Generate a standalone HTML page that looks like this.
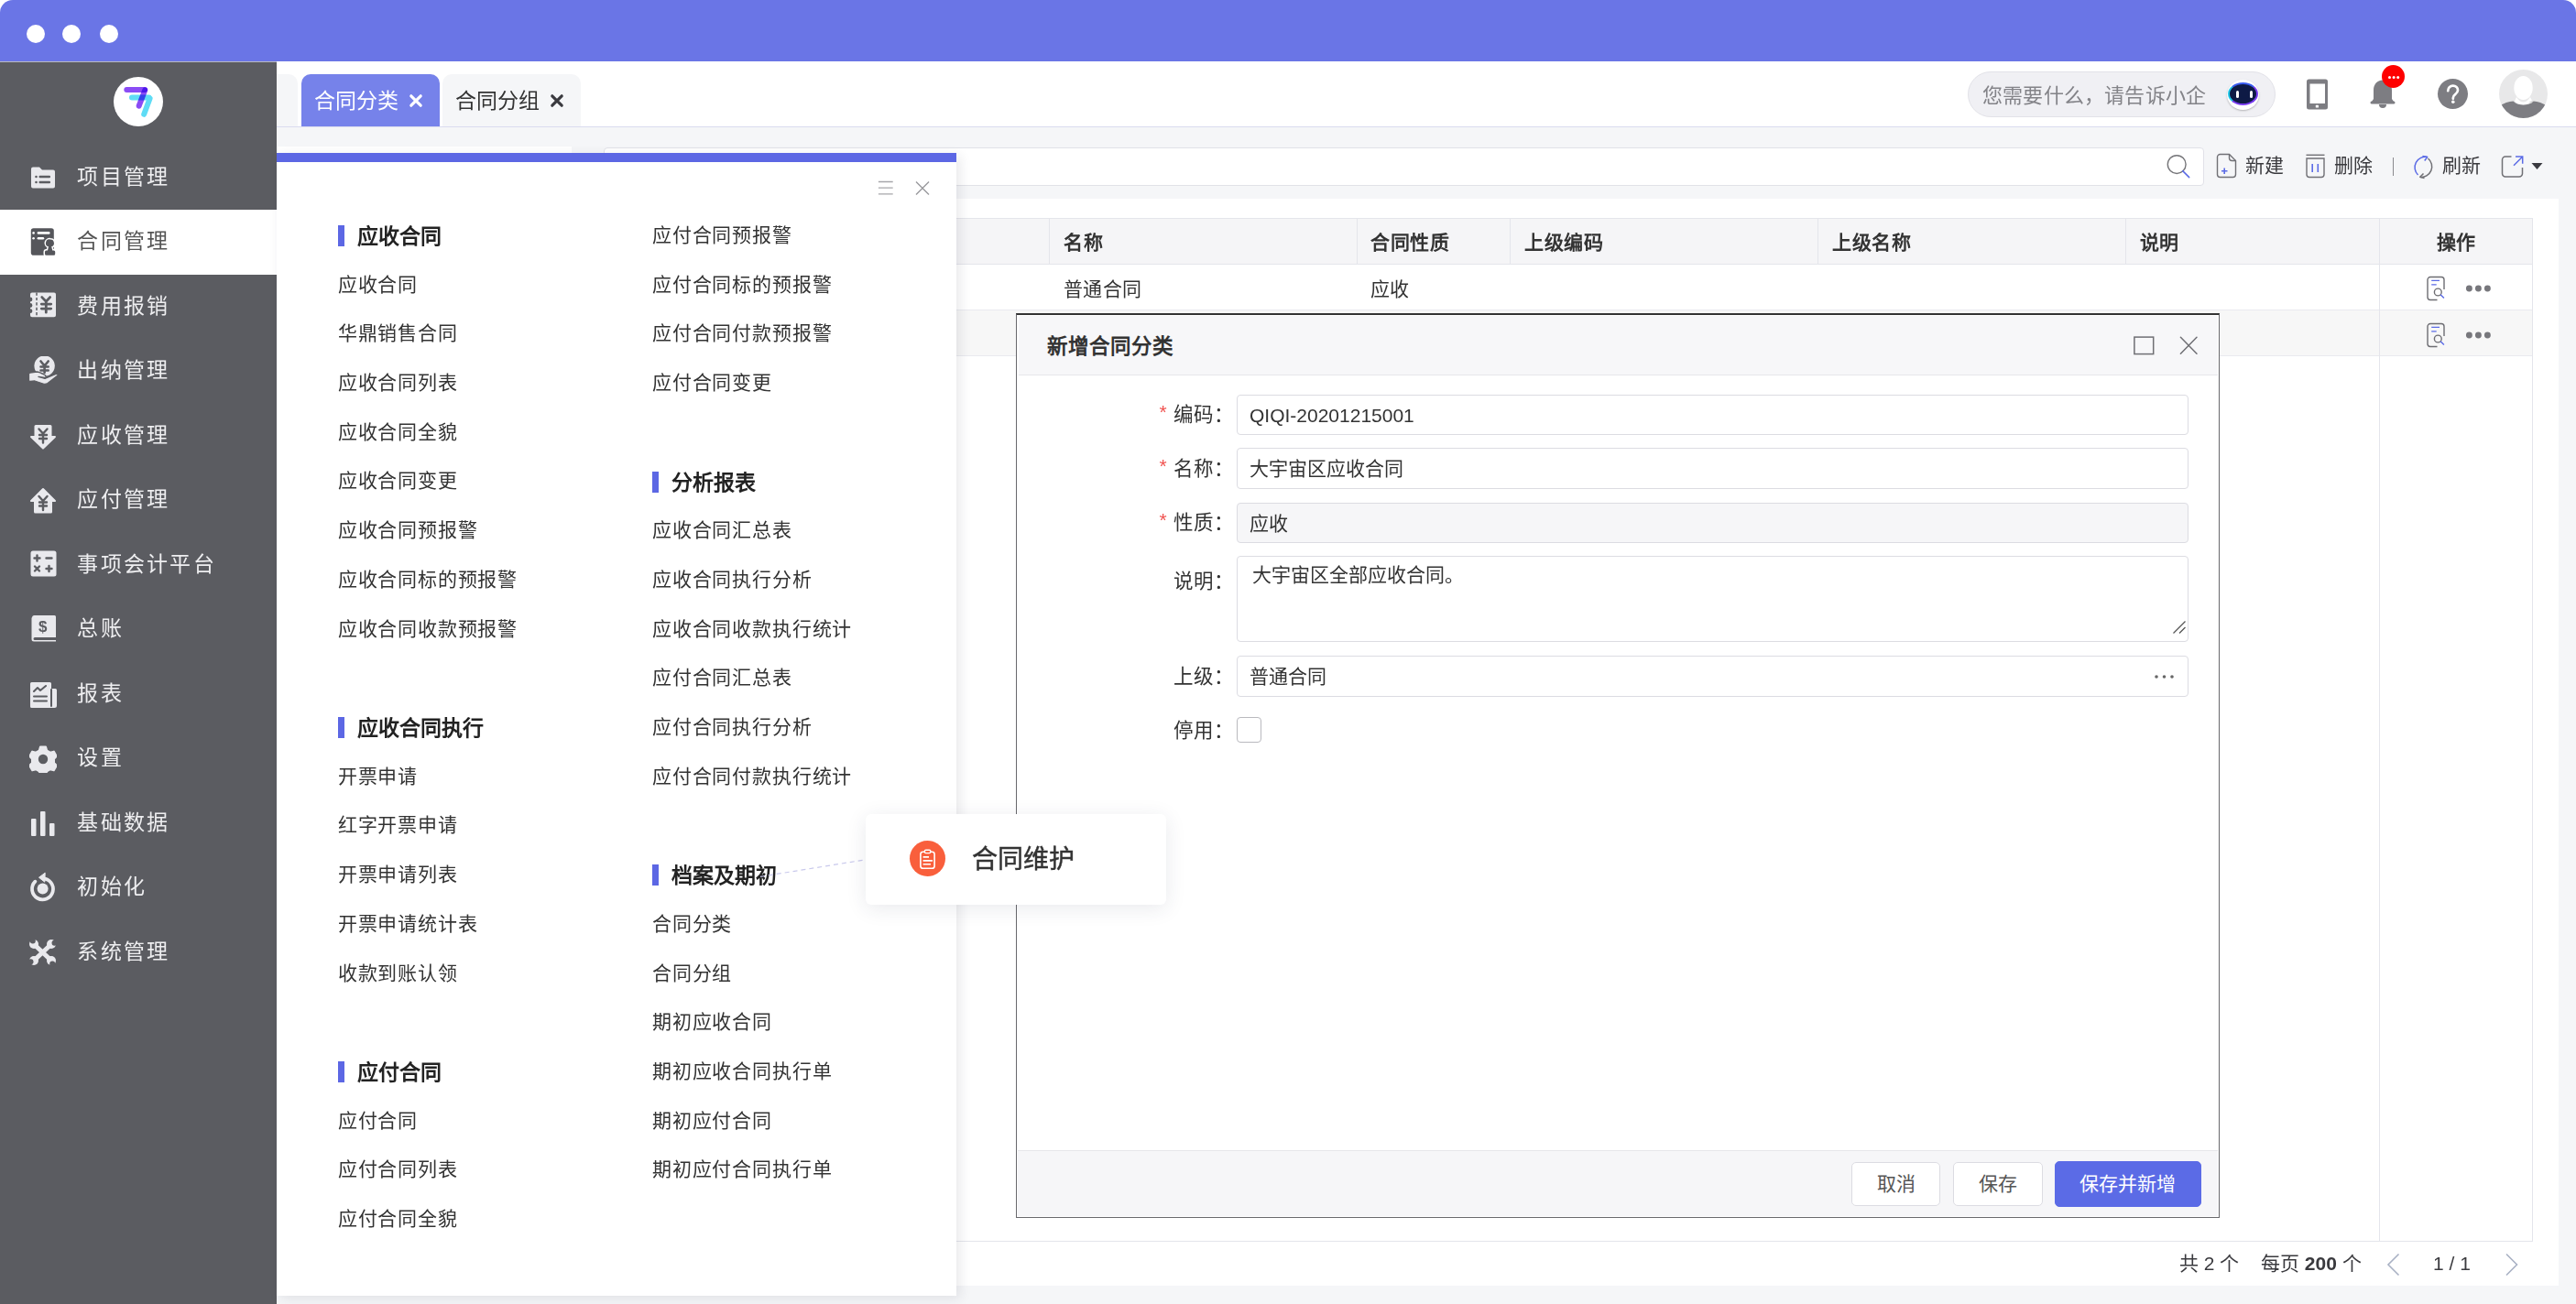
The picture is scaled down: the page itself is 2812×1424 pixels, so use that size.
<!DOCTYPE html>
<html lang="zh-CN"><head><meta charset="utf-8">
<style>
*{margin:0;padding:0;box-sizing:border-box}
html,body{width:2812px;height:1424px;overflow:hidden;background:#fff;font-family:"Liberation Sans",sans-serif;color:#333}
.a{position:absolute}
#title{left:0;top:0;width:2812px;height:67px;background:#6a75e6;border-radius:14px 14px 0 0}
.dot{width:20px;height:20px;border-radius:50%;background:#fff;top:27px}
#sb{left:0;top:67px;width:302px;height:1357px;background:#5b5c61;border-top:1px solid #b9bac0}
.mi{position:absolute;left:0;width:302px;height:70.5px;color:#eeeef0;font-size:23px;letter-spacing:2.3px;line-height:70.5px;white-space:nowrap}
.mi span{position:absolute;left:84.3px;top:-0.8px}
.mi svg{position:absolute;left:32px;top:21px}
.mi.on{background:#fff;color:#555}
#main{left:302px;top:68px;width:2510px;height:1356px;background:#f5f6f8}
#hdr{left:302px;top:68px;width:2510px;height:71px;background:#fff;border-bottom:1.2px solid #dadcef}
.tab{position:absolute;top:13px;height:57px;border-radius:10px 10px 0 0;background:#f5f6f8;font-size:23px;line-height:57px;color:#333;white-space:nowrap}
.tab.on{background:#7682ea;color:#fff}
.tb{top:166px;height:30px;line-height:30px;font-size:21px;color:#3a3a3e;white-space:nowrap}
.th{top:240px;height:50px;line-height:50px;font-size:21px;letter-spacing:0.5px;font-weight:bold;color:#333;white-space:nowrap}
.td{height:50px;line-height:50px;font-size:21px;letter-spacing:0.3px;color:#333;white-space:nowrap}
.pg{top:1365px;height:30px;line-height:30px;font-size:21px;color:#3a3a3e;white-space:nowrap}
.mh{height:40px;line-height:40px;font-size:23px;font-weight:bold;color:#222;white-space:nowrap}
.mt{height:40px;line-height:40px;font-size:21px;letter-spacing:0.83px;color:#333;white-space:nowrap}
.req{left:1263.5px;width:12px;text-align:center;font-size:21px;color:#f0524f;line-height:30px;height:30px}
.lb{left:1195px;width:152px;text-align:right;height:40px;line-height:40px;font-size:21.5px;color:#333;white-space:nowrap}
.inp{left:1350px;width:1039px;border:1.3px solid #dcdce2;border-radius:4px;background:#fff}
.it{font-size:21px;color:#333;white-space:nowrap}
.btn{top:1269.3px;height:47.7px;line-height:45.5px;text-align:center;font-size:21px;color:#555;background:#fff;border:1.3px solid #dcdce2;border-radius:5px;white-space:nowrap}
</style></head><body>
<div id="title" class="a">
  <div class="a dot" style="left:29px"></div>
  <div class="a dot" style="left:68px"></div>
  <div class="a dot" style="left:109px"></div>
</div>
<!-- SIDEBAR -->
<div id="sb" class="a">
  <div class="a" style="left:124px;top:15.5px;width:54px;height:54px;border-radius:50%;background:#fff">
    <svg width="54" height="54" viewBox="0 0 54 54" style="position:absolute;left:0;top:0">
      <g stroke-linecap="round" stroke-width="6" fill="none">
        <line x1="20" y1="22.4" x2="38.5" y2="22.4" stroke="#5fdcf5"/>
        <line x1="39.6" y1="23.5" x2="33.2" y2="40.8" stroke="#5fdcf5"/>
        <line x1="14.3" y1="14.1" x2="34" y2="14.1" stroke="#8a4cf5" style="mix-blend-mode:multiply"/>
        <line x1="34.3" y1="14.3" x2="27.7" y2="31.6" stroke="#8a4cf5" style="mix-blend-mode:multiply"/>
      </g>
    </svg>
  </div>
<div class="mi" style="top:90.5px"><svg width="30" height="30" viewBox="0 0 30 30"><path d="M2 4.5a2 2 0 0 1 2-2h7l3 3h12a2 2 0 0 1 2 2v16a2 2 0 0 1-2 2H4a2 2 0 0 1-2-2z" fill="#e9e9ed"/><g fill="#5b5c61"><circle cx="7.5" cy="13" r="1.3"/><circle cx="7.5" cy="19" r="1.3"/><rect x="10.5" y="11.8" width="12.5" height="2.4" rx="1"/><rect x="10.5" y="17.8" width="12.5" height="2.4" rx="1"/></g></svg><span>项目管理</span></div>
<div class="mi on" style="top:161.0px"><svg width="32" height="34" viewBox="0 0 32 34" style="left:32px;top:19px"><rect x="1.8" y="1.2" width="25" height="29.5" rx="2.8" fill="#55565b"/><g fill="#fff"><circle cx="4.6" cy="6.4" r="1.3"/><rect x="8.6" y="5.1" width="14" height="2.6" rx="1.3"/><circle cx="4.6" cy="12.3" r="1.3"/><rect x="8.6" y="11" width="7.6" height="2.6" rx="1.3"/></g><path d="M23 13.5a4 4 0 0 1 1.2 7.8l1 4.2h1.5a1.5 1.5 0 0 1 1.5 1.5v2.3a1.5 1.5 0 0 1-1.5 1.5h-8.2a1.5 1.5 0 0 1-1.5-1.5V27a1.5 1.5 0 0 1 1.5-1.5h1.5l1-4.2A4 4 0 0 1 23 13.5z" fill="#55565b" stroke="#fff" stroke-width="3" stroke-linejoin="round"/><path d="M23 13.5a4 4 0 0 1 1.2 7.8l1 4.2h1.5a1.5 1.5 0 0 1 1.5 1.5v2.3a1.5 1.5 0 0 1-1.5 1.5h-8.2a1.5 1.5 0 0 1-1.5-1.5V27a1.5 1.5 0 0 1 1.5-1.5h1.5l1-4.2A4 4 0 0 1 23 13.5z" fill="#55565b"/></svg><span>合同管理</span></div>
<div class="mi" style="top:231.5px"><svg width="32" height="30" viewBox="0 0 32 30" style="left:32px;top:19.7px"><path d="M3 0.5H27a2 2 0 0 1 2 2V25.3a2 2 0 0 1-2 2H3a2 2 0 0 1-2-2V23.1a2.4 2.4 0 0 0 0-4.8V16.9a2.4 2.4 0 0 0 0-4.8V10.4a2.4 2.4 0 0 0 0-4.8V2.5a2 2 0 0 1 2-2z" fill="#e9e9ed"/><path d="M8 0.5V27.3" stroke="#5b5c61" stroke-width="1.5" stroke-dasharray="3.2 2.2"/><g stroke="#5b5c61" stroke-width="2.8" fill="none" stroke-linecap="round" stroke-linejoin="round"><path d="M13.8 5.6l4.5 4.7 4.3-4.7M18.3 10.3v11.9M13.3 13.1h10.4M13.3 18.1h10.4"/></g></svg><span>费用报销</span></div>
<div class="mi" style="top:302.0px"><svg width="36" height="36" viewBox="0 0 36 36" style="left:30px;top:19px"><circle cx="18.6" cy="10.6" r="11.2" fill="#e9e9ed"/><g stroke="#5b5c61" stroke-width="2.6" fill="none" stroke-linecap="round"><path d="M14.5 5.5l4.1 5 4.1-5M18.6 10.5v7.5M14.5 11.5h8.2M14.5 15.5h8.2"/></g><path d="M1.5 19.5Q1.5 18 3 18L10 17Q13 17 19 20.5L19.5 21Q21 23 19 23.5L12 22.5L19 24.5L31 19.5Q33.5 19 33 21L22 29.5Q19.5 31 17 30L8 27L3 27.5Q1.5 27.5 1.5 26z" fill="#e9e9ed" stroke="#5b5c61" stroke-width="1.3" stroke-linejoin="round"/></svg><span>出纳管理</span></div>
<div class="mi" style="top:372.5px"><svg width="30" height="30" viewBox="0 0 30 30"><path d="M7 2h16a1.5 1.5 0 0 1 1.5 1.5V14H28a1 1 0 0 1 .7 1.7L15.7 28.3a1 1 0 0 1-1.4 0L1.3 15.7A1 1 0 0 1 2 14h3.5V3.5A1.5 1.5 0 0 1 7 2z" fill="#e9e9ed"/><g stroke="#5b5c61" stroke-width="2.4" fill="none" stroke-linecap="round"><path d="M10.5 6.5l4.5 5 4.5-5M15 11.5v10M11 13h8M11 17h8"/></g></svg><span>应收管理</span></div>
<div class="mi" style="top:443.0px"><svg width="30" height="30" viewBox="0 0 30 30"><path d="M14.3 1.3a1 1 0 0 1 1.4 0L28.7 14.3A1 1 0 0 1 28 16h-3v11a1.5 1.5 0 0 1-1.5 1.5h-17A1.5 1.5 0 0 1 5 27V16H2a1 1 0 0 1-.7-1.7z" fill="#e9e9ed"/><g stroke="#5b5c61" stroke-width="2.4" fill="none" stroke-linecap="round"><path d="M10.5 10l4.5 5 4.5-5M15 15v10M11 16.5h8M11 20.5h8"/></g></svg><span>应付管理</span></div>
<div class="mi" style="top:513.5px"><svg width="30" height="30" viewBox="0 0 30 30" style="left:32px;top:18px"><rect x="1.5" y="1.5" width="28" height="28" rx="2.5" fill="#e9e9ed"/><g stroke="#5b5c61" stroke-width="2.4" stroke-linecap="round"><path d="M5.5 9.5h6M8.5 6.5v6M18.5 9.5h6M6 18.5l5 5M11 18.5l-5 5M18.5 21h6M21.5 18v6"/></g></svg><span>事项会计平台</span></div>
<div class="mi" style="top:584.0px"><svg width="30" height="30" viewBox="0 0 30 30" style="left:32px;top:19px"><path d="M3 3.5A2.5 2.5 0 0 1 5.5 1h22A1.5 1.5 0 0 1 29 2.5V25H6a1.5 1.5 0 0 0 0 3h23v1.5H5A2.5 2.5 0 0 1 2.5 27V3.5z" fill="#e9e9ed"/><text x="16" y="19" font-size="17" font-family="Liberation Sans" fill="#5b5c61" text-anchor="middle" font-weight="bold">$</text></svg><span>总账</span></div>
<div class="mi" style="top:654.5px"><svg width="32" height="32" viewBox="0 0 32 32" style="left:30.5px;top:20.5px"><path d="M3.5 2h20A1.5 1.5 0 0 1 25 3.5V9h4.5A1.5 1.5 0 0 1 31 10.5v17A2.5 2.5 0 0 1 28.5 30h-25A1.5 1.5 0 0 1 2 28.5v-25A1.5 1.5 0 0 1 3.5 2z" fill="#e9e9ed"/><g stroke="#5b5c61" stroke-width="2" fill="none" stroke-linecap="round" stroke-linejoin="round"><path d="M6 12l4-4 3 3 6-5M6 17.5h14M6 22.5h14M25 10v18"/></g></svg><span>报表</span></div>
<div class="mi" style="top:725.0px"><svg width="30" height="30" viewBox="0 0 30 30"><path d="M12 1.5h6l1.2 4 3.6 2.1 4-1 3 5.2-2.8 3 0 4.2 2.8 3-3 5.2-4-1-3.6 2.1-1.2 4h-6l-1.2-4-3.6-2.1-4 1-3-5.2 2.8-3v-4.2l-2.8-3 3-5.2 4 1 3.6-2.1z" fill="#e9e9ed" stroke="#e9e9ed" stroke-width="2" stroke-linejoin="round"/><circle cx="15" cy="15" r="5.2" fill="#5b5c61"/></svg><span>设置</span></div>
<div class="mi" style="top:795.5px"><svg width="30" height="30" viewBox="0 0 30 30"><rect x="2" y="9" width="5.5" height="19" rx="1" fill="#e9e9ed"/><rect x="12" y="1" width="5.5" height="27" rx="1" fill="#e9e9ed"/><rect x="22" y="14" width="5.5" height="14" rx="1" fill="#e9e9ed"/></svg><span>基础数据</span></div>
<div class="mi" style="top:866.0px"><svg width="34" height="34" viewBox="0 0 34 34" style="left:32px;top:18px"><path d="M6.37 10.67A11.5 11.5 0 1 0 14.5 7.3" stroke="#e9e9ed" stroke-width="3.8" fill="none" stroke-linecap="round"/><path d="M10.5 6.2L17.2 1.2L16.8 11.2z" fill="#e9e9ed" stroke="#e9e9ed" stroke-width="1" stroke-linejoin="round"/><circle cx="14.6" cy="18.6" r="6" fill="#e9e9ed"/></svg><span>初始化</span></div>
<div class="mi" style="top:936.5px"><svg width="30" height="30" viewBox="0 0 30 30"><g stroke="#e9e9ed" stroke-width="5" stroke-linecap="round"><path d="M6 6L23 22M23 6L6 22"/></g><g fill="#e9e9ed"><circle cx="5" cy="5" r="5"/><circle cx="24" cy="5" r="5"/><circle cx="5" cy="23" r="5"/><circle cx="24" cy="23" r="5"/></g><g fill="#5b5c61"><circle cx="3.8" cy="1.5" r="3"/><circle cx="27.5" cy="3.8" r="3"/><circle cx="1.5" cy="24.2" r="3"/><circle cx="25.2" cy="26.5" r="3"/></g></svg><span>系统管理</span></div>
</div>
<div id="main" class="a"></div>
<div class="a" style="left:2799px;top:0;width:13px;height:14px;background:#f5f6f8;z-index:-1"></div>
<div id="hdr" class="a">
  <div class="tab" style="left:0px;width:23px;border-radius:0 10px 0 0"></div>
  <div class="tab on" style="left:27px;width:151px"><span class="a" style="left:14px;top:1.2px">合同分类</span><svg class="a" style="left:116.5px;top:20.5px" width="16" height="16" viewBox="0 0 16 16"><path d="M2.8 2.8l10.4 10.4M13.2 2.8L2.8 13.2" stroke="#fff" stroke-width="3.2" stroke-linecap="round"/></svg></div>
  <div class="tab" style="left:181px;width:151px"><span class="a" style="left:14px;top:1.2px">合同分组</span><svg class="a" style="left:116.5px;top:20.5px" width="16" height="16" viewBox="0 0 16 16"><path d="M2.8 2.8l10.4 10.4M13.2 2.8L2.8 13.2" stroke="#3a3a3f" stroke-width="3.2" stroke-linecap="round"/></svg></div>
  <!-- search pill -->
  <div class="a" style="left:1846px;top:10px;width:336px;height:50px;border-radius:25px;background:#f0f0f4;border:1.5px solid #e2e2e8"></div>
  <div class="a" style="left:1862px;top:11.6px;height:50px;line-height:50px;font-size:22px;letter-spacing:0.2px;color:#838388;white-space:nowrap">您需要什么，请告诉小企</div>
  <div class="a" style="left:2129px;top:19px;width:35px;height:33px;border-radius:50%;background:#fff;box-shadow:0 1px 2px rgba(0,0,0,.25)"></div>
  <div class="a" style="left:2130px;top:22px;width:33px;height:25px;border-radius:50%;background:#0e1a45;border:2px solid #7a3cf0;border-left-color:#21c6e8;border-top-color:#3a5cf0"></div>
  <div class="a" style="left:2139px;top:30.5px;width:3.4px;height:8.5px;border-radius:2px;background:#fff"></div>
  <div class="a" style="left:2154px;top:30.5px;width:3.4px;height:8.5px;border-radius:2px;background:#fff"></div>
  <!-- phone -->
  <svg class="a" style="left:2215px;top:18px" width="26" height="34" viewBox="0 0 26 34"><rect x="1" y="0.5" width="23" height="33" rx="2.5" fill="#7d7d82"/><rect x="4.5" y="5.5" width="16.5" height="21.5" fill="#fff"/><rect x="10.8" y="28.8" width="3.2" height="2.8" rx=".6" fill="#fff"/></svg>
  <!-- bell -->
  <svg class="a" style="left:2284px;top:18px" width="30" height="34" viewBox="0 0 30 34"><path d="M15 1.5c-6.5 0-10 5-10 11V22l-3 4.5h26L25 22v-9.5c0-6-3.5-11-10-11z" fill="#7d7d82"/><path d="M11 28h8a4 4 0 0 1-8 0z" fill="#7d7d82"/><rect x="1.5" y="24.5" width="27" height="3" rx="1.5" fill="#7d7d82"/></svg>
  <div class="a" style="left:2297.5px;top:3px;width:25px;height:25px;border-radius:50%;background:#fe0000"></div>
  <div class="a" style="left:2305px;top:14.5px;width:3px;height:3px;border-radius:50%;background:#fff;box-shadow:4.6px 0 0 #fff,9.2px 0 0 #fff"></div>
  <!-- help -->
  <div class="a" style="left:2358.5px;top:18px;width:33px;height:33px;border-radius:50%;background:#7d7d82"></div>
  <svg class="a" style="left:2358.5px;top:18px" width="33" height="33" viewBox="0 0 33 33"><path d="M11.2 13.2c0-3.2 2.4-5.6 5.5-5.6s5.3 2.2 5.3 5c0 2.2-1.4 3.4-2.9 4.5-1.5 1.1-2.3 1.9-2.3 3.9v.8" stroke="#fff" stroke-width="2.7" fill="none" stroke-linecap="round"/><circle cx="16.8" cy="25.2" r="1.8" fill="#fff"/></svg>
  <!-- avatar -->
  <svg class="a" style="left:2425.5px;top:8px" width="53" height="53" viewBox="0 0 53 53"><defs><clipPath id="avc"><circle cx="26.5" cy="26.5" r="26.5"/></clipPath></defs><g clip-path="url(#avc)"><rect width="53" height="53" fill="#e8e8e9"/><path d="M-2 41c6-4 12-6 17.5-6.5 3 3 7 4 11 4 4 0 8-1 11-4 5.5.5 11.5 2.5 17.5 6.5V60H-2z" fill="#7d7d82"/><ellipse cx="26.5" cy="20" rx="10.2" ry="13" fill="#fff"/><path d="M19 30c2 3.5 4.5 5.5 7.5 5.5s5.5-2 7.5-5.5l2 4c-3 3-6 4.2-9.5 4.2S19.5 37 17 34.5z" fill="#fff"/><path d="M33 35l5-1.2-3.2 3.2z" fill="#d9d9da"/></g></svg>

</div>
<!-- CONTENT -->
<div class="a" style="left:302px;top:160px;width:322px;height:40px;background:#fff"></div>
<div class="a" style="left:659px;top:160.5px;width:1747px;height:42.5px;background:#fff;border:1.2px solid #e1e2e8;border-radius:4px"></div>
<svg class="a" style="left:2360px;top:164px" width="36" height="36" viewBox="0 0 36 36"><circle cx="16.2" cy="15.6" r="9.9" stroke="#757579" stroke-width="1.4" fill="none"/><path d="M22.7 22.6l7 7" stroke="#5b6be6" stroke-width="1.5" stroke-linecap="round"/></svg>
<svg class="a" style="left:2418px;top:166px" width="26" height="30" viewBox="0 0 26 30"><path d="M5.5 2.5h10l7 7V24.5a3 3 0 0 1-3 3h-14a3 3 0 0 1-3-3v-19a3 3 0 0 1 3-3z" stroke="#707075" stroke-width="1.4" fill="none"/><path d="M15.5 2.5v4a3 3 0 0 0 3 3h4" stroke="#707075" stroke-width="1.4" fill="none"/><path d="M10.2 17.5v6.5M7 20.8h6.5" stroke="#5b6be6" stroke-width="1.6"/></svg>
<div class="a tb" style="left:2451px">新建</div>
<svg class="a" style="left:2515px;top:166px" width="26" height="30" viewBox="0 0 26 30"><path d="M2.5 3.3h20" stroke="#707075" stroke-width="1.4"/><path d="M3 7h19v17.5a3 3 0 0 1-3 3H6a3 3 0 0 1-3-3z" stroke="#707075" stroke-width="1.4" fill="none"/><path d="M9.2 13v9M15.3 13v9" stroke="#5b6be6" stroke-width="1.6"/></svg>
<div class="a tb" style="left:2548px">删除</div>
<div class="a" style="left:2611.5px;top:172px;width:1.4px;height:19.5px;background:#8a8a8e"></div>
<svg class="a" style="left:2630px;top:166px" width="32" height="32" viewBox="0 0 32 32"><path d="M19.7 5.5A11.5 11.5 0 0 0 9.5 25" stroke="#5b6be6" stroke-width="1.5" fill="none"/><path d="M14.5 4.5l5.2 1-3 4" stroke="#5b6be6" stroke-width="1.5" fill="none" stroke-linejoin="round"/><path d="M20.5 7A11.5 11.5 0 0 1 11.8 27.3" stroke="#707075" stroke-width="1.5" fill="none"/><path d="M15.5 23.5l-3.7 3.8 4.7 1.2" stroke="#707075" stroke-width="1.5" fill="none" stroke-linejoin="round"/></svg>
<div class="a tb" style="left:2666px">刷新</div>
<svg class="a" style="left:2729px;top:168px" width="28" height="28" viewBox="0 0 28 28"><path d="M12.5 3H6a3.5 3.5 0 0 0-3.5 3.5v15A3.5 3.5 0 0 0 6 25h15a3.5 3.5 0 0 0 3.5-3.5V15" stroke="#707075" stroke-width="1.5" fill="none"/><path d="M15 12.8l9.5-9.5M17 3h7.7v7.8" stroke="#5b6be6" stroke-width="1.5" fill="none"/></svg>
<svg class="a" style="left:2763px;top:177px" width="13" height="9" viewBox="0 0 13 9"><path d="M0.5 1h12L6.5 8z" fill="#3a3a40"/></svg>
<!-- white container -->
<div class="a" style="left:316px;top:217px;width:2477px;height:1186.5px;background:#fff"></div>
<!-- table -->
<div class="a" style="left:330px;top:237.5px;width:2435px;height:1118.5px;border:1.2px solid #e4e5eb;border-bottom-width:1.4px"></div>
<div class="a" style="left:331px;top:238.5px;width:2433px;height:50px;background:#f5f5f7;border-bottom:1.2px solid #e4e5eb"></div>
<div class="a" style="left:331px;top:338px;width:2433px;height:51px;background:#f7f7f7;border-top:1.2px solid #e9eaef;border-bottom:1.2px solid #e9eaef"></div>
<div class="a" style="left:1145px;top:238.5px;width:1.2px;height:50px;background:#e4e5eb"></div>
<div class="a" style="left:1480.5px;top:238.5px;width:1.2px;height:50px;background:#e4e5eb"></div>
<div class="a" style="left:1648px;top:238.5px;width:1.2px;height:50px;background:#e4e5eb"></div>
<div class="a" style="left:1984px;top:238.5px;width:1.2px;height:50px;background:#e4e5eb"></div>
<div class="a" style="left:2319.5px;top:238.5px;width:1.2px;height:50px;background:#e4e5eb"></div>
<div class="a" style="left:2596.5px;top:238.5px;width:1.2px;height:1117px;background:#e4e5eb"></div>
<div class="a th" style="left:1161px">名称</div>
<div class="a th" style="left:1496px">合同性质</div>
<div class="a th" style="left:1664px">上级编码</div>
<div class="a th" style="left:2000px">上级名称</div>
<div class="a th" style="left:2335.5px">说明</div>
<div class="a th" style="left:2659.5px">操作</div>
<div class="a td" style="left:1161px;top:290.8px">普通合同</div>
<div class="a td" style="left:1496px;top:290.8px">应收</div>
<svg class="a" style="left:2646.5px;top:300px" width="26" height="30" viewBox="0 0 26 30"><path d="M6 2.5h12a3 3 0 0 1 3 3v10.5" stroke="#6d6d72" stroke-width="1.4" fill="none"/><path d="M13.5 27.5H6a3 3 0 0 1-3-3v-19a3 3 0 0 1 3-3" stroke="#6d6d72" stroke-width="1.4" fill="none"/><path d="M7.2 6.3h8.8M7.2 10.8h5.5" stroke="#5b6be6" stroke-width="1.3"/><circle cx="14.3" cy="19" r="3.9" stroke="#6d6d72" stroke-width="1.4" fill="none"/><path d="M17.1 21.8l3.8 3.7" stroke="#5b6be6" stroke-width="1.5"/></svg>
<svg class="a" style="left:2690px;top:308.5px" width="32" height="12" viewBox="0 0 32 12"><circle cx="5.4" cy="6" r="3.45" fill="#77777c"/><circle cx="15.4" cy="6" r="3.45" fill="#77777c"/><circle cx="25.4" cy="6" r="3.45" fill="#77777c"/></svg>
<svg class="a" style="left:2646.5px;top:350.5px" width="26" height="30" viewBox="0 0 26 30"><path d="M6 2.5h12a3 3 0 0 1 3 3v10.5" stroke="#6d6d72" stroke-width="1.4" fill="none"/><path d="M13.5 27.5H6a3 3 0 0 1-3-3v-19a3 3 0 0 1 3-3" stroke="#6d6d72" stroke-width="1.4" fill="none"/><path d="M7.2 6.3h8.8M7.2 10.8h5.5" stroke="#5b6be6" stroke-width="1.3"/><circle cx="14.3" cy="19" r="3.9" stroke="#6d6d72" stroke-width="1.4" fill="none"/><path d="M17.1 21.8l3.8 3.7" stroke="#5b6be6" stroke-width="1.5"/></svg>
<svg class="a" style="left:2690px;top:359.5px" width="32" height="12" viewBox="0 0 32 12"><circle cx="5.4" cy="6" r="3.45" fill="#77777c"/><circle cx="15.4" cy="6" r="3.45" fill="#77777c"/><circle cx="25.4" cy="6" r="3.45" fill="#77777c"/></svg>
<!-- pagination -->
<div class="a pg" style="left:2379px">共 2 个</div>
<div class="a pg" style="left:2468px">每页 <b>200</b> 个</div>
<svg class="a" style="left:2604px;top:1368px" width="18" height="26" viewBox="0 0 18 26"><path d="M14.5 1.5L3 13l11.5 11.5" stroke="#a9b1c4" stroke-width="1.6" fill="none"/></svg>
<div class="a pg" style="left:2656px">1 / 1</div>
<svg class="a" style="left:2733px;top:1368px" width="18" height="26" viewBox="0 0 18 26"><path d="M3 1.5L14.5 13 3 24.5" stroke="#a9b1c4" stroke-width="1.6" fill="none"/></svg>

<!-- PANEL -->
<div class="a" style="left:302px;top:167px;width:742px;height:1247.5px;background:#fff;box-shadow:4px 3px 12px rgba(40,40,60,.10)"></div>
<div class="a" style="left:302px;top:167px;width:742px;height:10px;background:#5c67e4"></div>
<svg class="a" style="left:956px;top:195px" width="21" height="20" viewBox="0 0 21 20"><path d="M2.9 3.5h15.8M2.9 10.1h15.8M2.9 16.8h15.8" stroke="#a6a6aa" stroke-width="1.3"/></svg>
<svg class="a" style="left:997px;top:195px" width="20" height="20" viewBox="0 0 20 20"><path d="M3 3.4l14 14M17 3.4l-14 14" stroke="#99999d" stroke-width="1.4"/></svg>
<div class="a" style="left:369px;top:245.90px;width:7px;height:23px;background:#5c67e4"></div>
<div class="a mh" style="left:390px;top:238.00px">应收合同</div>
<div class="a mt" style="left:368.7px;top:290.52px">应收合同</div>
<div class="a mt" style="left:368.7px;top:344.24px">华鼎销售合同</div>
<div class="a mt" style="left:368.7px;top:397.96px">应收合同列表</div>
<div class="a mt" style="left:368.7px;top:451.68px">应收合同全貌</div>
<div class="a mt" style="left:368.7px;top:505.40px">应收合同变更</div>
<div class="a mt" style="left:368.7px;top:559.12px">应收合同预报警</div>
<div class="a mt" style="left:368.7px;top:612.84px">应收合同标的预报警</div>
<div class="a mt" style="left:368.7px;top:666.56px">应收合同收款预报警</div>
<div class="a" style="left:369px;top:783.10px;width:7px;height:23px;background:#5c67e4"></div>
<div class="a mh" style="left:390px;top:775.20px">应收合同执行</div>
<div class="a mt" style="left:368.7px;top:827.72px">开票申请</div>
<div class="a mt" style="left:368.7px;top:881.44px">红字开票申请</div>
<div class="a mt" style="left:368.7px;top:935.16px">开票申请列表</div>
<div class="a mt" style="left:368.7px;top:988.88px">开票申请统计表</div>
<div class="a mt" style="left:368.7px;top:1042.60px">收款到账认领</div>
<div class="a" style="left:369px;top:1159.14px;width:7px;height:23px;background:#5c67e4"></div>
<div class="a mh" style="left:390px;top:1151.24px">应付合同</div>
<div class="a mt" style="left:368.7px;top:1203.76px">应付合同</div>
<div class="a mt" style="left:368.7px;top:1257.48px">应付合同列表</div>
<div class="a mt" style="left:368.7px;top:1311.20px">应付合同全貌</div>
<div class="a mt" style="left:712px;top:236.80px">应付合同预报警</div>
<div class="a mt" style="left:712px;top:290.52px">应付合同标的预报警</div>
<div class="a mt" style="left:712px;top:344.24px">应付合同付款预报警</div>
<div class="a mt" style="left:712px;top:397.96px">应付合同变更</div>
<div class="a" style="left:711.5px;top:514.50px;width:7px;height:23px;background:#5c67e4"></div>
<div class="a mh" style="left:732.5px;top:506.60px">分析报表</div>
<div class="a mt" style="left:712px;top:559.12px">应收合同汇总表</div>
<div class="a mt" style="left:712px;top:612.84px">应收合同执行分析</div>
<div class="a mt" style="left:712px;top:666.56px">应收合同收款执行统计</div>
<div class="a mt" style="left:712px;top:720.28px">应付合同汇总表</div>
<div class="a mt" style="left:712px;top:774.00px">应付合同执行分析</div>
<div class="a mt" style="left:712px;top:827.72px">应付合同付款执行统计</div>
<div class="a" style="left:711.5px;top:944.26px;width:7px;height:23px;background:#5c67e4"></div>
<div class="a mh" style="left:732.5px;top:936.36px">档案及期初</div>
<div class="a mt" style="left:712px;top:988.88px">合同分类</div>
<div class="a mt" style="left:712px;top:1042.60px">合同分组</div>
<div class="a mt" style="left:712px;top:1096.32px">期初应收合同</div>
<div class="a mt" style="left:712px;top:1150.04px">期初应收合同执行单</div>
<div class="a mt" style="left:712px;top:1203.76px">期初应付合同</div>
<div class="a mt" style="left:712px;top:1257.48px">期初应付合同执行单</div>
<!-- MODAL -->
<div class="a" style="left:1109px;top:342px;width:1314px;height:987.5px;background:#fff;border:1.5px solid #68686c;border-top:2px solid #333"></div>
<div class="a" style="left:1111.5px;top:345px;width:1309px;height:64.5px;background:#f7f7f9;border-bottom:1.2px solid #e6e6ea;border-radius:3px 3px 0 0"></div>
<div class="a" style="left:1143px;top:359px;height:40px;line-height:40px;font-size:22.5px;font-weight:bold;color:#333;white-space:nowrap">新增合同分类</div>
<svg class="a" style="left:2327px;top:365px" width="26" height="24" viewBox="0 0 26 24"><rect x="2.9" y="3.1" width="20.8" height="18.5" stroke="#6f6f74" stroke-width="1.5" fill="none"/></svg>
<svg class="a" style="left:2377px;top:365px" width="24" height="24" viewBox="0 0 24 24"><path d="M3.4 3.3l17.6 18M21 3.3L3.4 21.3" stroke="#6f6f74" stroke-width="1.5" stroke-linecap="round"/></svg>
<!-- form -->
<div class="a req" style="top:435px">*</div>
<div class="a lb" style="top:432.5px">编码：</div>
<div class="a inp" style="top:430.5px;height:44.5px"><span class="a it" style="left:13px;top:0;line-height:44.5px">QIQI-20201215001</span></div>
<div class="a req" style="top:494px">*</div>
<div class="a lb" style="top:491.5px">名称：</div>
<div class="a inp" style="top:489.2px;height:44.7px"><span class="a it" style="left:13px;top:0;line-height:44.7px">大宇宙区应收合同</span></div>
<div class="a req" style="top:553px">*</div>
<div class="a lb" style="top:550.5px">性质：</div>
<div class="a inp" style="top:548.5px;height:44.8px;background:#f6f6f8"><span class="a it" style="left:13px;top:0;line-height:44.8px">应收</span></div>
<div class="a lb" style="top:615px">说明：</div>
<div class="a inp" style="top:607.3px;height:94px"><span class="a it" style="left:16px;top:8px;line-height:24px">大宇宙区全部应收合同。</span>
<svg class="a" style="right:1px;bottom:7px" width="16" height="16" viewBox="0 0 16 16"><path d="M1.5 14.5L14.5 1.5M8 14.5l6.5-6.5" stroke="#555" stroke-width="1.3"/></svg></div>
<div class="a lb" style="top:718.5px">上级：</div>
<div class="a inp" style="top:716.3px;height:44.3px"><span class="a it" style="left:13px;top:0;line-height:44.3px">普通合同</span>
<svg class="a" style="left:1000px;top:18px" width="24" height="8" viewBox="0 0 24 8"><circle cx="3" cy="4" r="1.8" fill="#666"/><circle cx="11.5" cy="4" r="1.8" fill="#666"/><circle cx="20" cy="4" r="1.8" fill="#666"/></svg></div>
<div class="a lb" style="top:777.5px">停用：</div>
<div class="a" style="left:1350px;top:783.2px;width:27px;height:28px;border:1.5px solid #b9b9be;border-radius:4px;background:#fff"></div>
<!-- footer -->
<div class="a" style="left:1110.6px;top:1256px;width:1310.8px;height:71.8px;background:#f6f6f8;border-top:1.2px solid #e6e6ea"></div>
<div class="a btn" style="left:2021px;width:97px">取消</div>
<div class="a btn" style="left:2132px;width:97.5px">保存</div>
<div class="a btn" style="left:2243px;width:159.5px;background:#5b6be6;border-color:#5b6be6;color:#fff;top:1268.4px;height:49.2px;line-height:47px">保存并新增</div>
<!--  -->
<svg class="a" style="left:820px;top:930px" width="130" height="35" viewBox="0 0 130 35"><path d="M10 27.3L125 8.8" stroke="#c9c9ec" stroke-width="1.2" stroke-dasharray="5 4"/></svg>
<div class="a" style="left:945px;top:889px;width:328px;height:99px;background:#fff;border-radius:6px;box-shadow:0 4px 22px rgba(40,45,80,.10)"></div>
<div class="a" style="left:993.2px;top:918px;width:39px;height:39px;border-radius:50%;background:#f95f3c"></div>
<svg class="a" style="left:1001px;top:925px" width="24" height="26" viewBox="0 0 24 26"><rect x="3.9" y="5.2" width="15.2" height="18.1" rx="2.6" stroke="#fff" stroke-width="1.6" fill="none"/><rect x="8.3" y="3.2" width="6.6" height="3.4" rx="1.5" stroke="#fff" stroke-width="1.4" fill="#f95f3c"/><path d="M6.6 10.9h6.4M6.6 14.9h10.4M6.6 18.8h8.4" stroke="#fff" stroke-width="1.6"/></svg>
<div class="a" style="left:1061px;top:919.3px;height:40px;line-height:40px;font-size:28px;color:#333;-webkit-text-stroke:0.45px #333;white-space:nowrap">合同维护</div>

</body></html>
